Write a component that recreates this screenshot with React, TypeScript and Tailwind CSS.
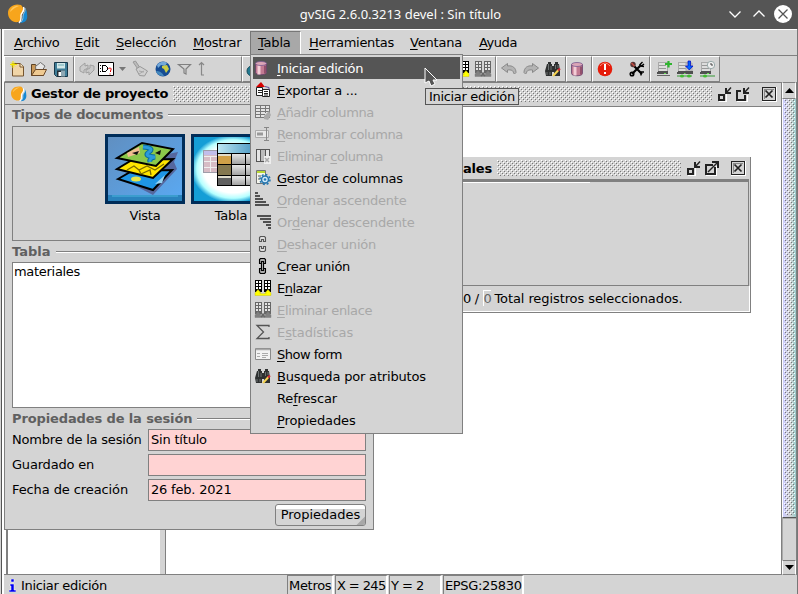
import React from "react";

type Kids = { children?: React.ReactNode };

function Icon({ children, className = "" }: Kids & { className?: string }) {
  return (
    <svg width="16" height="16" viewBox="0 0 16 16" className={"shrink-0 overflow-visible " + className}>
      {children}
    </svg>
  );
}

/* Draws a label; the letter after "_" is its mnemonic. */
function Label({ text, className = "" }: { text: string; className?: string }) {
  const i = text.indexOf("_");
  if (i < 0) return <span className={className}>{text}</span>;
  return (
    <span className={className}>
      {text.slice(0, i)}
      <span className="underline decoration-1 underline-offset-2 [text-decoration-skip-ink:none]">{text[i + 1]}</span>
      {text.slice(i + 2)}
    </span>
  );
}

function Bumps({ id, className }: { id: string; className: string }) {
  return (
    <svg className={className} shapeRendering="crispEdges">
      <defs>
        <pattern id={id} width="4" height="4" patternUnits="userSpaceOnUse">
          <rect width="1" height="1" fill="#fff" />
          <rect x="2" y="2" width="1" height="1" fill="#fff" />
          <rect x="1" y="1" width="1" height="1" fill="#777" />
          <rect x="3" y="3" width="1" height="1" fill="#777" />
        </pattern>
      </defs>
      <rect width="100%" height="100%" fill={`url(#${id})`} />
    </svg>
  );
}

function Logo({ size, className = "" }: { size: number; className?: string }) {
  return (
    <svg width={size} height={size} viewBox="0 0 20 20" className={"shrink-0 " + className}>
      <path d="M13 1C6-1 0 3 0 9c0 6 5 10 10 9 4-1 2-5 4-8 2-2 2-6-1-9z" fill="#f7a51c" />
      <path d="M2 8C3 3 8 1 11 2c-3 1-6 3-9 6z" fill="#ffc65a" />
      <path d="M17 3c2 4-1 5-2 8-1 3 1 5-3 8 6 0 8-4 7-9 0-3-1-5-2-7z" fill="#1688d2" />
      <path d="M15.500 3c2 4-2 5-2.500 8 0 3 1 5-2 8" stroke="#fff" strokeWidth="1.400" fill="none" />
      <path d="M17 4c1 4-2 5-2 8 0 2 0 4-2 6" stroke="#a8d6f2" strokeWidth=".8" fill="none" />
    </svg>
  );
}

function Cylinder({ className = "" }: { className?: string }) {
  return (
    <Icon className={className}>
      <path d="M.5 3.500v9c0 3 11 3 11 0v-9z" fill="#c27a92" stroke="#65406a" strokeWidth=".8" />
      <path d="M2.500 5h3v9.500h-3z" fill="#f3cdd6" />
      <path d="M9 5.500h2v8H9z" fill="#93506c" />
      <ellipse cx="6" cy="3.500" rx="5.500" ry="2" fill="#dba5b6" stroke="#7a5a90" strokeWidth=".8" />
    </Icon>
  );
}

function Binoculars({ className = "" }: { className?: string }) {
  return (
    <Icon className={className}>
      <path d="M2 3h1V1h3v2h1v2h2V3h1V1h3v2h1l1 7v5H9v-4H7v4H1l-1-5z" fill="#2e3030" />
      <path d="M3.500 3v6M6 5v4M10.500 4v4M13 4v3M2 11v3M5 11v3" stroke="#6c7171" fill="none" />
      <path d="M8 15l5.500-6" stroke="#f6d452" strokeWidth="2" />
      <path d="M13 9.500l2-2" stroke="#d42c38" strokeWidth="2" />
    </Icon>
  );
}

function LinkTables({ on, className = "" }: { on: boolean; className?: string }) {
  const ink = on ? "#000" : "#666";
  return (
    <Icon className={className}>
      <g shapeRendering="crispEdges">
        <path d="M0 0h7v12H0zM9 0h7v12H9z" fill={ink} />
        <path d="M1 1h2v2H1zM4 1h2v2H4zM1 4h2v2H1zM4 4h2v2H4zM1 7h2v2H1zM4 7h2v2H4zM10 1h2v2h-2zM13 1h2v2h-2zM10 4h2v2h-2zM13 4h2v2h-2zM10 7h2v2h-2zM13 7h2v2h-2z" fill={on ? "#fff" : "#e4e4e4"} />
      </g>
      <path d="M0 13l3-3.500L6 13H4.500c1 1 6 1 7 0H10l3-3.500 3 3.500v2.500H0z" fill={on ? "#ffff00" : "#808080"} stroke={on ? "#c9bd00" : "#777"} strokeWidth=".4" />
      {!on && <path d="M6 11l4 4M10 11l-4 4" stroke="#666" strokeWidth="1.500" />}
    </Icon>
  );
}

function Chain({ joined }: { joined: boolean }) {
  const ink = joined ? "#000" : "#555";
  return (
    <Icon>
      <path d="M4.500 5.500v-4l1-1h4l1 1v4h-2v-2h-2v2zM4.500 10.500v4l1 1h4l1-1v-4h-2v2h-2v-2z" fill={joined ? "#aaa" : "#ddd"} stroke={ink} strokeWidth="1.100" />
      {joined && <path d="M6.500 3v10M8.500 3v10" stroke="#000" strokeWidth="1.200" />}
    </Icon>
  );
}

function Server({ kind, className = "" }: { kind: "add" | "down" | "clock"; className?: string }) {
  return (
    <Icon className={className}>
      <g shapeRendering="crispEdges">
        <path d="M1 1h9v10H1z" fill="#ddd" stroke="#aaa" />
        <path d="M2 4h7M2 7h7" stroke="#999" />
        <path d="M1 10h10v3H0z" fill="#505050" />
        <path d="M7 12h2" stroke="#66dd55" />
      </g>
      {kind === "add" && (
        <>
          <path d="M0 14.500h13" stroke="#666" />
          <path d="M8 3h7M11.500 0v6.500" stroke="#2fb52f" strokeWidth="2.200" />
        </>
      )}
      {kind === "down" && (
        <>
          <path d="M9 2h6v8H9z" fill="#ccc" stroke="#aaa" />
          <path d="M8.500 10H16v3H8.500z" fill="#505050" />
          <path d="M11 0h2.500v5H16l-3.700 4L8.500 5H11z" fill="#0066ff" stroke="#0000c0" strokeWidth=".7" />
        </>
      )}
      {kind === "clock" && (
        <>
          <circle cx="11" cy="4" r="3.700" fill="#eee" stroke="#9aa" />
          <path d="M11 2v2h2" stroke="#444" fill="none" />
        </>
      )}
      {kind !== "add" && (
        <>
          <path d="M0 15h15" stroke="#369936" />
          <ellipse cx="5" cy="15" rx="2" ry="1.500" fill="#40bd30" />
          {kind === "down" && <ellipse cx="12" cy="15" rx="2" ry="1.500" fill="#40bd30" />}
        </>
      )}
    </Icon>
  );
}

function Undo({ flip = false, className = "" }: { flip?: boolean; className?: string }) {
  return (
    <Icon className={className}>
      <g transform={flip ? "translate(16 0) scale(-1 1)" : undefined}>
        <path d="M.5 7l6-4.500V5c5-1 8.500 2 8.500 6.500L13.500 13l-1-1c0-2.500-2.500-3.500-6-3v2.500z" fill="#b4b4b4" stroke="#8a8a8a" />
      </g>
    </Icon>
  );
}

function ToolGroup({ className, children }: Kids & { className: string }) {
  return (
    <div className={"flex h-[26px] shrink-0 items-center overflow-hidden border-t border-r border-b border-l border-t-white border-r-[#808080] border-b-[#808080] border-l-white " + className}>
      {children}
    </div>
  );
}

function Toolbar() {
  return (
    <div className="flex h-[26px] pl-1">
      <ToolGroup className="w-[70px]">
        <Icon className="ml-[5px]">
          <path d="M2.500 2.500h7.500l3.500 3v9.500h-11z" fill="#f0d5a8" stroke="#765530" />
          <path d="M10 2.500v3.500h3.500" fill="#fff0ca" stroke="#765530" />
          <path d="M3 0v7M0 3.500h7M1 1.500l4 4M5 1.500l-4 4" stroke="#f3e500" />
        </Icon>
        <Icon className="ml-[5px]">
          <path d="M.5 3.500h4l1 2h7v9h-12z" fill="#c9995a" stroke="#5d4325" />
          <path d="M4.500 5.500l5-4 4.500 3.500-3 5h-6z" fill="#e7e7e7" stroke="#555" strokeWidth=".8" />
          <path d="M.5 14.500l4-6h11l-3 6z" fill="#efca92" stroke="#6a4828" />
        </Icon>
        <Icon className="ml-[6px]">
          <path d="M1.500 1.500h13v14h-11l-2-2z" fill="#3f7d98" stroke="#18384a" />
          <path d="M4 2h8v5.500H4z" fill="#d2e8e9" />
          <path d="M4 9.500h8v6H4z" fill="#242d34" />
          <path d="M5.500 11h2.500v4H5.500z" fill="#fff" />
          <path d="M8 9.500h4v6H8z" fill="#8fa9b4" />
          <path d="M5 4h6" stroke="#6eabb4" />
        </Icon>
      </ToolGroup>
      <ToolGroup className="w-[168px]">
        <Icon className="ml-[4px]">
          <path d="M1 10V6l5-4v3l3-1v3L5 9v3z" fill="#ccc" stroke="#a0a0a0" />
          <path d="M15 5v4l-5 5v-3l-3 1V9l4-2V4z" fill="#c8c8c8" stroke="#a0a0a0" />
        </Icon>
        <Icon className="ml-[3px]">
          <path d="M.5 1.500h15v13H.5z" fill="#fff" stroke="#000" />
          <path d="M4.500 4.500h3l2 2v2l-2 2h-3z" fill="none" stroke="#000" shapeRendering="crispEdges" />
          <path d="M2 4.500h1M2 7.500h1M2 10.500h1" stroke="#000" />
          <path d="M10.500 8q.5-1.500 2-1t0 3v1M12 12.500v1" stroke="#e00000" fill="none" />
        </Icon>
        <svg width="7" height="4" className="ml-[5px]"><path d="M0 0h7L3.500 4z" fill="#777" /></svg>
        <Icon className="ml-[6px]">
          <path d="M1 1l2.500-1 4 6-2 1.500z" fill="#bbb" stroke="#999" />
          <path d="M4 8l4-2.500L15.500 10l-3 5-5-.5z" fill="#d0d0d0" stroke="#999" />
          <path d="M7 10l5 1M7 13l5-3" stroke="#aaa" />
        </Icon>
        <Icon className="ml-[7px]">
          <circle cx="8" cy="8" r="7.500" fill="#164c93" />
          <path d="M2 4C5 0 10 0 12 2l-2 3-4-1-3 3z" fill="#72a8d9" />
          <path d="M7 5l5-1 2 4-3 4-2-4-2-1z" fill="#c9cb46" />
          <path d="M1 10c3 0 6 1 8 5-4 0-7-1-8-5z" fill="#4689bd" />
        </Icon>
        <Icon className="ml-[6px]"><path d="M1.500 3.500h12L9 8v5l-2-1V8z" fill="none" stroke="#808080" strokeWidth="1.200" /></Icon>
        <Icon className="ml-[6px]"><path d="M2.500 14V2M0 4l2.500-2.500L5 4M2 14h3" fill="none" stroke="#888" strokeWidth="1.200" /></Icon>
      </ToolGroup>
      <ToolGroup className="w-[254px]">
        <Icon className="ml-[4px]"><circle cx="5" cy="10" r="5" fill="#237a91" stroke="#174c5b" /></Icon>
        <LinkTables on className="ml-[190px]" />
        <LinkTables on={false} className="ml-[6px]" />
      </ToolGroup>
      <ToolGroup className="w-[70px]">
        <Undo className="ml-[4px]" />
        <Undo flip className="ml-[6px]" />
        <Binoculars className="ml-[6px]" />
      </ToolGroup>
      <ToolGroup className="w-[26px]"><Cylinder className="ml-[4px]" /></ToolGroup>
      <ToolGroup className="w-[58px]">
        <Icon className="ml-[4px]">
          <circle cx="8" cy="8" r="7.300" fill="#e51c0a" />
          <path d="M3 5q5-6 10 0" stroke="#fa8d78" fill="none" />
          <path d="M8 3v6M8 11v2" stroke="#fff" strokeWidth="2" />
        </Icon>
        <Icon className="ml-[16px]">
          <path d="M4 4l9 9M3 13l9-9" stroke="#000" strokeWidth="2.200" />
          <circle cx="4" cy="3.500" r="2.700" fill="#553333" />
          <path d="M2.500 2l3 3" stroke="#c54c42" strokeWidth="1.500" />
          <path d="M13.500 1L11 3.500 12.500 5 15 3M11.500 5l3.500.5" stroke="#000" fill="none" strokeWidth="1.400" />
          <path d="M11.500 11h3.500M12 11v3.500" stroke="#000" strokeWidth="1.400" />
          <circle cx="3" cy="13" r="1.800" fill="none" stroke="#000" strokeWidth="1.500" />
        </Icon>
      </ToolGroup>
      <ToolGroup className="w-[70px]">
        <Server kind="add" className="ml-[6px]" />
        <Server kind="down" className="ml-[4px]" />
        <Server kind="clock" className="ml-[7px]" />
      </ToolGroup>
    </div>
  );
}

function MenuBar() {
  const item = "flex h-full shrink-0 items-center pl-2 ";
  return (
    <nav className="flex h-[27px] border-t border-b border-t-white border-b-[#808080] pl-1.5">
      <div className={item + "w-[61px] tracking-[-0.5px]"}><Label text="_Archivo" /></div>
      <div className={item + "w-[41px]"}><Label text="_Edit" /></div>
      <div className={item + "w-[77px]"}><Label text="_Selección" /></div>
      <div className={item + "w-[65px]"}><Label text="_Mostrar" /></div>
      <div className="mt-px flex h-6 w-[51px] shrink-0 items-start border-t border-r border-l border-t-[#777] border-r-white border-l-[#777] bg-[#a8a8a8] pt-[2px] pl-[7px]"><Label text="_Tabla" /></div>
      <div className={item + "w-[101px] tracking-[-0.3px]"}><Label text="_Herramientas" /></div>
      <div className={item + "w-[69px]"}><Label text="_Ventana" /></div>
      <div className={item + "tracking-[-0.45px]"}><Label text="_Ayuda" /></div>
    </nav>
  );
}

function FrameButton({ kind }: { kind: "min" | "restore" | "max" | "close" }) {
  return (
    <svg width="16" height="16" viewBox="0 0 16 16" className="shrink-0" fill="none" stroke="#222" shapeRendering="crispEdges">
      {kind === "min" && <><path d="M2 15h7V8" stroke="#fff" /><path d="M2 9h5v5H2z" strokeWidth="1.400" /><path d="M9 2v5h5" strokeWidth="1.400" /><path d="M9.500 6.500l4.500-5" strokeWidth="1.400" shapeRendering="auto" /></>}
      {kind === "restore" && <><path d="M2 15h10V9" stroke="#fff" /><path d="M10 9v5H2V5h4" strokeWidth="1.400" /><path d="M9 2v5h5" strokeWidth="1.400" /><path d="M9.500 6.500l4.500-5" strokeWidth="1.400" shapeRendering="auto" /></>}
      {kind === "max" && <><path d="M2 15h10V6" stroke="#fff" /><path d="M9 5H2v9h9V7" strokeWidth="2" /><path d="M8 2h6v6" strokeWidth="2" /><path d="M4 12L14 2" strokeWidth="1.500" shapeRendering="auto" /></>}
      {kind === "close" && <><path d="M1 15.500h14.500V1" stroke="#fff" /><path d="M1.500 1.500h13v13h-13z" /><path d="M3 13V3h10" stroke="#888" /><path d="M4.500 4.500l7 7M11.500 4.500l-7 7" strokeWidth="1.700" shapeRendering="auto" /></>}
    </svg>
  );
}

function Heading({ children, fit = "" }: Kids & { fit?: string }) {
  return (
    <div className="flex items-center gap-[5px]">
      <h2 className={"font-bold text-[#606060] " + fit}>{children}</h2>
      <div className="h-0.5 flex-1 border-t border-b border-t-[#808080] border-b-white" />
    </div>
  );
}

function Field({ label, value, fit = "" }: { label: string; value: string; fit?: string }) {
  return (
    <div className="flex h-[25px] items-start">
      <span className={"w-[136px] pt-[2px] whitespace-nowrap " + fit}>{label}</span>
      <div className="h-[22px] w-[218px] border border-[#808080] bg-[#ffd3d3] px-[2px] pt-px">{value}</div>
    </div>
  );
}

function VistaPicture() {
  return (
    <svg width="80" height="70" viewBox="0 0 80 70">
      <defs><linearGradient id="vista-sky" x1="0" y1="0" x2="1" y2="1"><stop stopColor="#608fc1" /><stop offset="1" stopColor="#5aa9f2" /></linearGradient></defs>
      <path d="M0 0h80v70H0z" fill="#002d59" />
      <path d="M3 3h74v64H3z" fill="url(#vista-sky)" />
      <path d="M3 61h74v6H3z" fill="#2a83bd" />
      <path d="M7 61h66v2H7z" fill="#3b9dce" />
      <path d="M23 48l40-28 10-2-4 10 3 7-24 26z" fill="#55679e" />
      <path d="M13 45l14-8 40-1-19 20z" fill="#1f96e6" stroke="#000" strokeWidth="2" />
      <ellipse cx="31" cy="45" rx="5" ry="2.500" fill="#e8e64b" />
      <path d="M50 50l10-9-3 8z" fill="#97d4f4" />
      <path d="M12 35l15-9 41-1-20 19z" fill="#ffe500" stroke="#000" strokeWidth="2" />
      <path d="M22 36l7-4 5 4 8-4 8 4 9-6M34 36l2 4 9-4 1 5" stroke="#7b6b00" strokeWidth="1.300" fill="none" />
      <path d="M12 24L37 9l31 6-17 17z" fill="#8bc84b" stroke="#000" strokeWidth="2" />
      <path d="M22 19l12-6 1 6-12 4z" fill="#f2bd91" />
      <path d="M27 19l7-2-2 4zM50 19l6-3-1 5z" fill="#111" />
      <path d="M38 13q12 1 6 5t6 5q-6 1-5 5" stroke="#096c9e" strokeWidth="5" fill="none" />
      <path d="M38 13q12 1 6 5t6 5q-6 1-5 5" stroke="#2b9adb" strokeWidth="3" fill="none" />
    </svg>
  );
}

function TablaPicture() {
  return (
    <svg width="80" height="70" viewBox="0 0 80 70">
      <defs>
        <radialGradient id="tabla-glow"><stop offset=".7" stopColor="#fff" /><stop offset=".86" stopColor="#b5ffff" /><stop offset="1" stopColor="#159ed6" /></radialGradient>
        <linearGradient id="tabla-head"><stop stopColor="#bde7f2" /><stop offset="1" stopColor="#267fb5" /></linearGradient>
        <linearGradient id="tabla-cell" x1="0" y1="0" x2="0" y2="1"><stop stopColor="#e6e6e6" /><stop offset="1" stopColor="#a2a2a2" /></linearGradient>
        <clipPath id="tabla-inner"><rect x="3" y="3" width="74" height="64" /></clipPath>
      </defs>
      <path d="M0 0h80v70H0z" fill="#002d59" />
      <path d="M3 3h74v64H3z" fill="#159ed6" />
      <ellipse cx="42" cy="35" rx="42" ry="34" fill="url(#tabla-glow)" clipPath="url(#tabla-inner)" />
      <g shapeRendering="crispEdges">
        <path d="M12.500 16.500h20v22h-20z" fill="#d7bcc5" stroke="#9d9da9" />
        <path d="M13 17h19v4H13z" fill="#c1bdea" />
        <path d="M13 22.500h19M13 27.500h19M13 33.500h19M19.500 22v16" stroke="#eee" />
        <path d="M26 9h50v43H26z" fill="#000" />
        <path d="M27 10h48v9H27z" fill="url(#tabla-head)" />
        <path d="M27 20h13v10H27z" fill="#d0a048" />
        <path d="M27 31h13v10H27z" fill="#857850" />
        <path d="M27 42h13v9H27z" fill="#606060" />
        <path d="M27 20h13v2H27zM27 42h13v2H27z" fill="#e0dccc" />
        <rect x="41" y="20" width="13" height="10" fill="url(#tabla-cell)" />
        <rect x="41" y="31" width="13" height="10" fill="url(#tabla-cell)" />
        <rect x="41" y="42" width="13" height="9" fill="url(#tabla-cell)" />
        <rect x="55" y="20" width="20" height="10" fill="url(#tabla-cell)" />
        <rect x="55" y="31" width="20" height="10" fill="url(#tabla-cell)" />
        <rect x="55" y="42" width="20" height="9" fill="url(#tabla-cell)" />
      </g>
    </svg>
  );
}

function ProjectManager() {
  return (
    <section className="absolute top-[82px] left-1 flex h-[448px] w-[370px] flex-col border border-[#808080] bg-[#d4d4d4]">
      <header className="flex h-[22px] shrink-0 items-center overflow-hidden border-b border-[#808080] pl-[6px]">
        <Logo size={16} />
        <span className="mr-[5px] ml-[4px] shrink-0 font-bold">Gestor de proyecto</span>
        <Bumps id="bumps-manager" className="h-4 flex-1" />
      </header>
      <div className="flex flex-1 flex-col px-[7px] pt-px">
        <Heading fit="tracking-[-0.26px]">Tipos de documentos</Heading>
        <div className="mt-[3px] flex h-[115px] shrink-0 gap-[6px] border border-[#808080] pt-[7px] pl-[92px]">
          <div className="flex w-20 flex-col items-center gap-[3px]"><VistaPicture /><span>Vista</span></div>
          <div className="flex w-20 flex-col items-center gap-[3px]"><TablaPicture /><span>Tabla</span></div>
        </div>
        <div className="mt-[2px]"><Heading fit="tracking-normal">Tabla</Heading></div>
        <div className="mt-[2px] h-[146px] shrink-0 border border-[#808080] bg-white px-px tracking-[-0.3px]">materiales</div>
        <div className="mt-[2px]"><Heading fit="tracking-[-0.12px]">Propiedades de la sesión</Heading></div>
        <div className="mt-[2px]">
          <Field label="Nombre de la sesión" value="Sin título" />
          <Field label="Guardado en" value="" />
          <Field label="Fecha de creación" value="26 feb. 2021" fit="tracking-[-0.1px]" />
        </div>
        <button className="relative h-[22px] w-[91px] shrink-0 self-end overflow-hidden rounded-[3px] border border-[#808080] bg-linear-to-b from-white from-20% to-[#d4d4d4] to-20%">
          <span className="absolute right-[-6px] bottom-[-6px] size-3 rotate-45 bg-[#a8a8a8]" />
          <span className="relative block leading-[18px] tracking-normal">Propiedades</span>
        </button>
      </div>
    </section>
  );
}

const G = "#555";
const entries: { text: string; fit?: string; off?: boolean; icon?: React.ReactNode }[] = [
  { text: "_Iniciar edición", fit: "tracking-[-0.3px]", icon: <Cylinder /> },
  { text: "_Exportar a ...", fit: "tracking-[-0.3px]", icon: <Icon><path d="M1.500 5.500h6v8h-6zM7.500 7.500h7v7h-7z" fill="#fff" stroke="#222" /><path d="M3 8.500h4M3 10.500h4M9 9.500h4M9 11.500h4M9 13h4" stroke="#222" /><path d="M10 4.500l4 1v2" stroke="#5b4c99" fill="none" /><path d="M1 5l5-5 4 5z" fill="#d50000" /></Icon> },
  { text: "_Añadir columna", fit: "tracking-[-0.38px]", off: true, icon: <Icon><path d="M.5 1.500h14v12H.5z" fill="#e4e4e4" /><path d="M.5 1.500h14v12H.5zM.5 4.500h14M.5 7.500h14M.5 10.500h9M5.500 1v12M10.500 1v8" fill="none" stroke="#777" shapeRendering="crispEdges" /><path d="M9 12l5-5 2 4-3 5-4-1z" fill="#aaa" /></Icon> },
  { text: "_Renombrar columna", fit: "tracking-[-0.37px]", off: true, icon: <Icon><path d="M.5 4.500h13v7H.5z" fill="#e8e8e8" stroke="#aaa" /><path d="M2 8h6" stroke="#999" strokeWidth="3" /><path d="M9 1.500h5M9 14.500h5M11.500 2v12" stroke="#888" shapeRendering="crispEdges" /></Icon> },
  { text: "Eliminar _columna", fit: "tracking-[-0.45px]", off: true, icon: <Icon><path d="M1 1h13v13H1z" fill="#e5e5e5" /><path d="M6 2h4v11H6z" fill="#bbb" /><path d="M1.500 1.500h13v12h-13zM5.500 1v12M10.500 1v12" fill="none" stroke={G} shapeRendering="crispEdges" /><path d="M9 8h7v8H9z" fill="#eee" /><path d="M10 10l4 4M14 10l-4 4" stroke="#aaa" strokeWidth="1.500" /></Icon> },
  { text: "_Gestor de columnas", fit: "tracking-[-0.26px]", icon: <Icon><path d="M1.500.5h9v13h-9z" fill="#f5f5ed" stroke="#777" /><path d="M2 2h8" stroke="#b9d933" strokeWidth="2" /><path d="M3 6h3M3 9h2" stroke="#555" /><circle cx="10" cy="9.500" r="5" fill="none" stroke="#2476af" strokeWidth="1.500" strokeDasharray="2 1.900" /><circle cx="10" cy="9.500" r="3.500" fill="#d3ebfb" stroke="#2476af" strokeWidth="1.600" /><circle cx="10" cy="9.500" r="1.300" fill="#2476af" /></Icon> },
  { text: "_Ordenar ascendente", fit: "tracking-[-0.19px]", off: true, icon: <Icon><path d="M0 0h3v2H0zM0 3h5v2H0zM0 6h8v2H0zM0 9h11v2H0zM0 12h14v2H0z" fill="#505050" shapeRendering="crispEdges" /></Icon> },
  { text: "Or_denar descendente", off: true, icon: <Icon><path d="M2 1h14v2H2zM5 4h11v2H5zM8 7h8v2H8zM11 10h5v2h-5zM13 13h3v2h-3z" fill="#505050" shapeRendering="crispEdges" /></Icon> },
  { text: "_Deshacer unión", off: true, icon: <Chain joined={false} /> },
  { text: "_Crear unión", fit: "tracking-[-0.25px]", icon: <Chain joined /> },
  { text: "E_nlazar", fit: "tracking-[-0.5px]", icon: <LinkTables on /> },
  { text: "_Eliminar enlace", fit: "tracking-[-0.35px]", off: true, icon: <LinkTables on={false} /> },
  { text: "E_stadísticas", fit: "tracking-[-0.1px]", off: true, icon: <Icon><path d="M14 3V1.500H2L8.500 8 2 14.500h12V13" fill="none" stroke={G} strokeWidth="1.300" /></Icon> },
  { text: "_Show form", fit: "tracking-[-0.5px]", icon: <Icon><path d="M.5 2.500h15v11H.5z" fill="#f2f2f2" stroke="#8a8a8a" /><path d="M1 3.500h14" stroke="#aaa" strokeWidth="1.500" /><path d="M2 7.500h3M2 10.500h3M7 7.500h6M7 9.500h6M7 11.500h4" stroke="#aaa" /></Icon> },
  { text: "_Busqueda por atributos", fit: "tracking-[-0.18px]", icon: <Binoculars /> },
  { text: "Re_frescar", fit: "tracking-[-0.15px]" },
  { text: "_Propiedades", fit: "tracking-[-0.1px]" },
];

function TablaMenu() {
  return (
    <div className="absolute top-[54px] left-[250px] h-[380px] w-[213px] border border-[#808080] bg-[#d4d4d4] px-[2px] py-[2px]">
      {entries.map((e, i) => (
        <div key={e.text} className={"flex h-[22px] w-[207px] items-center pl-[2px] whitespace-nowrap " + (i === 0 ? "bg-[#555] text-white" : e.off ? "text-[#a8a8a8]" : "")}>
          <span className="mr-[6px] flex w-4">{e.icon}</span>
          <Label text={e.text} className={e.fit} />
        </div>
      ))}
    </div>
  );
}

function TableWindow() {
  return (
    <section className="absolute top-[157px] left-[380px] flex h-[156px] w-[371px] flex-col border-r border-b border-[#808080] bg-[#d4d4d4]">
      <header className="flex h-[22px] shrink-0 items-center pl-[83px]">
        <span className="mr-[6px] w-[28px] font-bold">ales</span>
        <Bumps id="bumps-table" className="h-4 w-[184px]" />
        <span className="ml-[5px] flex items-center"><FrameButton kind="min" /><span className="ml-[2px] flex"><FrameButton kind="max" /></span><span className="ml-[10px] flex"><FrameButton kind="close" /></span></span>
      </header>
      <div className="mr-px h-[107px] shrink-0 border-t-[3px] border-r border-b border-[#808080]"><div className="h-px w-[210px] bg-white" /></div>
      <div className="flex flex-1 items-center border-r border-b border-white pl-[83px] whitespace-nowrap">
        <span className="tracking-[-0.35px]">0 / <span className="border-t border-l border-white text-[#666]">0</span></span>
        <span className="ml-[3px] tracking-[-0.09px]">Total registros seleccionados.</span>
      </div>
    </section>
  );
}

function ScrollBar() {
  return (
    <div className="absolute top-[82px] left-[781px] flex h-[493px] w-4 flex-col border-r border-l border-[#808080] bg-[#d4d4d4]">
      <div className="flex h-[17px] items-center justify-center border border-white border-t-[#808080] border-b-[#808080]"><svg width="9" height="5"><path d="M0 5l4.500-5L9 5z" /></svg></div>
      <div className="h-[419px] border-b border-[#555] border-l border-l-white bg-linear-to-r from-[#ccccff] via-[#d4d4d4] via-55% to-[#99cccc]"><Bumps id="bumps-scroll" className="ml-px h-[416px] w-[11px]" /></div>
      <div className="flex-1 border-t border-l border-[#aaa]" />
      <div className="flex h-[15px] items-center justify-center border border-white border-t-[#808080] border-b-[#808080]"><svg width="9" height="5"><path d="M0 0h9L4.500 5z" /></svg></div>
    </div>
  );
}

function StatusBar() {
  const cell = "h-[19px] shrink-0 border-t border-r-2 border-l border-t-[#808080] border-r-white border-l-[#808080] pt-px leading-[18px] ";
  return (
    <footer className="absolute top-[575px] left-1 flex h-[19px] w-[792px] whitespace-nowrap">
      <div className="flex w-[283px] items-center pt-[2px]">
        <svg width="7" height="13" className="ml-[5px]"><path d="M2 0h3v3H2zM1 5h4v6h2v2H0v-2h2V7H1z" fill="#0000f0" stroke="#fff" strokeWidth=".5" /></svg>
        <span className="ml-[5px] tracking-[-0.32px]">Iniciar edición</span>
      </div>
      <div className={cell + "w-[47px] pl-px tracking-[-0.3px]"}>Metros</div>
      <div className={cell + "ml-px w-[53px] pl-px tracking-[-0.6px]"}>X = 245</div>
      <div className={cell + "ml-px w-[53px] pl-px tracking-[-0.5px]"}>Y = 2</div>
      <div className={cell + "ml-px w-[81px] pl-px tracking-[-0.35px]"}>EPSG:25830</div>
    </footer>
  );
}

export default function App() {
  return (
    <main className="relative flex h-[594px] w-[798px] flex-col overflow-hidden bg-[#d4d4d4] font-['DejaVu_Sans',sans-serif] text-[13px] leading-[17px] tracking-[-0.2px] text-black">
      <header className="relative flex h-[29px] shrink-0 items-center justify-center bg-[#555] pl-[3px] text-[#fcfcfc]">
        <Logo size={20} className="absolute top-1 left-2" />
        <h1 className="font-['Noto_Sans',sans-serif] tracking-normal">gvSIG 2.6.0.3213 devel : Sin título</h1>
        <svg width="72" height="24" className="absolute top-[2px] right-0" fill="none" stroke="#fff" strokeWidth="1.300">
          <path d="M3.500 9.500L9 15l5.500-5.500M27.500 14.500L33 9l5.500 5.500" />
          <circle cx="57" cy="12" r="9" fill="#fff" stroke="none" />
          <path d="M52.500 7.500l9 9M61.500 7.500l-9 9" stroke="#555" />
        </svg>
      </header>
      <MenuBar />
      <Toolbar />
      <div className="flex-1 border-b border-[#808080] bg-white" />
      <div className="h-[19px] shrink-0" />
      <div className="absolute top-[82px] left-[374px] flex h-[25px] w-[407px] items-center border-t border-b border-t-[#808080] border-b-[#808080] bg-[#d4d4d4] pb-px whitespace-nowrap">
        <Bumps id="bumps-view" className="h-4 w-[338px]" />
        <span className="ml-[5px] flex gap-[2px]"><FrameButton kind="min" /><FrameButton kind="restore" /></span>
        <span className="ml-[10px] flex"><FrameButton kind="close" /></span>
      </div>
      <div className="absolute top-[529px] left-[5px] flex h-[46px] w-[161px] border-b border-[#808080]">
        <div className="w-[3px] border-r-2 border-[#808080]" />
        <div className="flex-1 bg-white" />
        <div className="w-[6px] border-r border-[#808080] bg-[#d4d4d4]" />
      </div>
      <ProjectManager />
      <TableWindow />
      <ScrollBar />
      <StatusBar />
      <div className="absolute top-[29px] left-0 flex h-[565px] w-1 bg-white">
        <div className="w-px bg-[#d4d4d4]" />
        <div className="w-px bg-[#555]" />
      </div>
      <div className="absolute top-[29px] left-[797px] h-[565px] w-px bg-[#777]" />
      <TablaMenu />
      <div className="absolute top-[88px] left-[425px] h-[17px] w-[94px] border border-[#555] bg-[#d4d4d4] pl-[3px] leading-4 tracking-[-0.32px] whitespace-nowrap">Iniciar edición</div>
      <svg className="absolute top-[67px] left-[424px]" width="15" height="20">
        <path d="M1 1v15l4-2 2 5 4-2-2-4h4z" fill="#555" stroke="#fff" />
      </svg>
    </main>
  );
}
